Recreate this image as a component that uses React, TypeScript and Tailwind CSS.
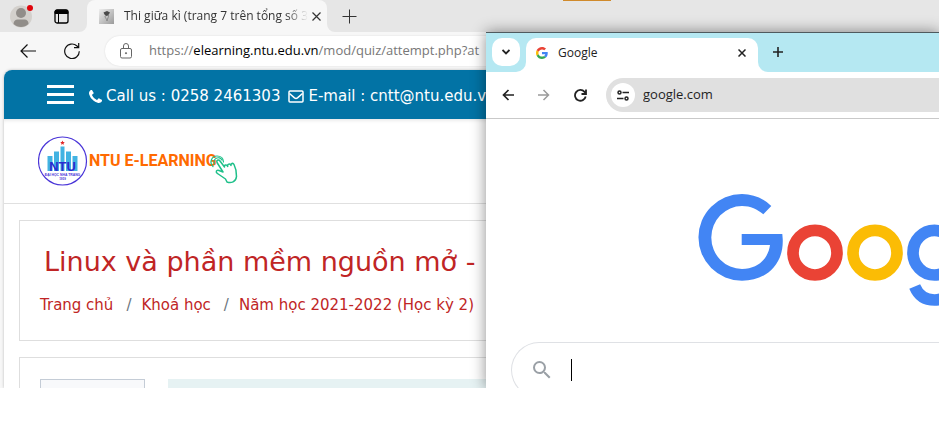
import type { ReactNode } from "react";

const uiFont = "font-['Open_Sans','Noto_Sans',sans-serif]";
const pageFont = "font-['DejaVu_Sans',sans-serif]";

function IconButton({ label, className = "", children }: { label: string; className?: string; children: ReactNode }) {
  return (
    <button type="button" aria-label={label} className={`flex shrink-0 items-center justify-center ${className}`}>
      {children}
    </button>
  );
}

function EdgeTabBar() {
  return (
    <div className="flex h-8 bg-[#f7f7f7]">
      <div className="flex w-[87px] shrink-0 items-center gap-5 rounded-br-lg bg-[#e6e6e6] pl-[11px]">
        <IconButton label="Profile" className="size-[22px]">
          <svg width="24" height="24" viewBox="0 0 24 24" className="shrink-0">
            <circle cx="11" cy="12.500" r="11" fill="#d3d0cc" />
            <circle cx="11" cy="9" r="5" fill="#918d89" />
            <path d="M3.500 20c0-3 2-4.500 4-4.500h7c2.500 0 4 1.500 4 4.500-4 4-11 4-15 0z" fill="#918d89" />
            <circle cx="20" cy="4" r="3" fill="#e0040b" />
          </svg>
        </IconButton>
        <IconButton label="Tab actions" className="size-4">
          <svg width="15" height="15" viewBox="0 0 15 15" fill="none" stroke="#000">
            <rect x="1" y="1" width="13" height="13" rx="2" strokeWidth="1.300" />
            <path d="M1 3.200a2 2 0 0 1 2-2h9a2 2 0 0 1 2 2V4.500H1z" fill="#000" />
            <path d="M4.500 4v10" />
          </svg>
        </IconButton>
      </div>
      <div className="w-60 shrink-0 bg-[linear-gradient(#e6e6e6_50%,#f7f7f7_50%)]">
        <div className="flex h-8 items-center rounded-t-lg bg-[#f7f7f7] pr-2 pl-3">
          <svg width="15" height="15" viewBox="0 0 15 15" className="shrink-0">
            <defs>
              <linearGradient id="fav" x1="0" x2="1" y1="0" y2="1">
                <stop offset="0" stopColor="#eee" />
                <stop offset="1" stopColor="#9a9a9a" />
              </linearGradient>
            </defs>
            <rect width="15" height="15" fill="url(#fav)" />
            <path d="M4.500 3.500 8 2l3 1.500L9 6.500 7 7 5.500 5.500z" fill="#4a4a4a" />
            <path d="M6 7c0 2 2 3 2 5M9.500 6c.5 2-1 3-1.500 6" stroke="#888" fill="none" />
          </svg>
          <span className="ml-2.5 flex-1 text-xs whitespace-nowrap text-[#333] [mask-image:linear-gradient(90deg,#000_88%,transparent)]">
            Thi giữa kì (trang 7 trên tổng số 3
          </span>
          <IconButton label="Close tab" className="size-4">
            <svg width="9" height="9" viewBox="0 0 9 9" stroke="#333" strokeWidth="1.200">
              <path d="m.5.5 8 8M8.500.5l-8 8" />
            </svg>
          </IconButton>
        </div>
      </div>
      <div className="flex flex-1 rounded-bl-lg bg-[#e6e6e6] pl-3.5">
        <IconButton label="New tab" className="h-8 w-4">
          <svg width="15" height="15" viewBox="0 0 15 15" stroke="#333" strokeWidth="1">
            <path d="M7.500.5v14M.5 7.500h14" />
          </svg>
        </IconButton>
        <div className="ml-[206px] h-px w-12 bg-[#d08a2b]" />
      </div>
    </div>
  );
}

function EdgeToolbar() {
  return (
    <div className="flex h-[38px] items-center bg-[#f7f7f7] pl-5">
      <IconButton label="Back" className="size-4">
        <svg width="16" height="14" viewBox="0 0 16 14" fill="none" stroke="#111" strokeWidth="1.200">
          <path d="M16 7H1M7.500.5 1 7l6.500 6.500" />
        </svg>
      </IconButton>
      <IconButton label="Refresh" className="ml-7 size-4">
        <svg width="16" height="16" viewBox="0 0 16 16" fill="none" stroke="#111" strokeWidth="1.200">
          <path d="M15.300 8.200A7.300 7.300 0 1 1 13 3l1.500 1.500M14.700 0v4.700H10" />
        </svg>
      </IconButton>
      <div className="ml-[25px] flex h-[30px] flex-1 items-center rounded-l-full bg-white pl-[15px] shadow-[0_0_2px_rgba(0,0,0,0.12)]">
        <svg width="12" height="16" viewBox="0 0 12 16" fill="none" stroke="#666" className="shrink-0">
          <rect x=".5" y="5.500" width="11" height="9.500" rx="1.500" />
          <path d="M3.500 5.500V3a2.500 2.500 0 0 1 5 0v2.500" />
          <circle cx="6" cy="10.200" r=".6" fill="#666" />
        </svg>
        <span className="ml-[17px] text-[13px] whitespace-nowrap text-[#777]">
          https://<span className="text-black">elearning.ntu.edu.vn</span>/mod/quiz/attempt.php?at
        </span>
      </div>
    </div>
  );
}

function NtuLogo() {
  return (
    <div className="flex h-[85px] items-center border-b border-[#e0e0e0] pl-[34px] shadow-[inset_0_4px_4px_-3px_rgba(0,0,0,0.12)]">
      <svg width="50" height="50" viewBox="0 0 50 50" className="shrink-0">
        <circle cx="24.500" cy="25" r="24" fill="#fff" stroke="#4a35d8" strokeWidth="1.200" />
        <path d="m24.500 4.500.7 1.400 1.600.2-1.200 1.100.3 1.600-1.400-.8-1.400.8.3-1.600-1.200-1.100 1.600-.2z" fill="#e22b2b" />
        <path d="M9.500 20h5v15h-5zM16 15.500h5V35h-5zM22.500 10.500h4V35h-4zM28 15.500h5V35h-5zM34.500 20h5v15h-5z" fill="#42b3e2" />
        <text x="24.500" y="34.500" textAnchor="middle" fontSize="13" fontFamily="Liberation Sans" fontWeight="700" fill="#2b2bd0">NTU</text>
        <text x="24.500" y="39.500" textAnchor="middle" fontSize="3.400" fontFamily="Liberation Sans" fontWeight="700" fill="#4a35d8">ĐẠI HỌC NHA TRANG</text>
        <text x="24.500" y="44" textAnchor="middle" fontSize="3" fontFamily="Liberation Sans" fontWeight="700" fill="#4a35d8">1959</text>
      </svg>
      <span className="ml-px font-['Roboto',sans-serif] text-base leading-5 font-bold whitespace-nowrap text-[#ff6a00]">
        NTU E-LEARNING
      </span>
      <svg width="30" height="32" viewBox="0 0 30 32" fill="none" stroke="#1fc08a" strokeWidth="1.500" strokeLinejoin="round" strokeLinecap="round" className="-ml-2 mt-5 shrink-0">
        <path d="M8 7.500 14 17l-4-1.500c-3-1-3.500 2-1.500 3l8 5.500 1.500 3c4 1.500 9 0 9.500-5.500.3-5-.5-8-2.500-12-1-2-3.500-1-3 1-1-2.500-4-1.500-3.300 1-1-2.500-3.800-1.500-3.200.5L11 6c-1.500-2-4-.5-3 1.500z" />
        <path d="M5.500 9a4.200 4.200 0 1 1 7.500-4M4 11.500C0 7.500 2.500 1 8 1c4 0 6.500 2.500 6.500 6" strokeWidth="1.200" />
      </svg>
    </div>
  );
}

function MoodlePage() {
  const crumbs = ["Trang chủ", "Khoá học", "Năm học 2021-2022 (Học kỳ 2)"];
  return (
    <div className={`ml-1 flex-1 overflow-hidden rounded-tl-lg bg-white shadow-[0_0_3px_rgba(0,0,0,0.25)] ${pageFont}`}>
      <header className="flex h-[49px] items-center bg-[#0273a5] pl-[43px] text-[15px] whitespace-nowrap text-white">
        <IconButton label="Menu" className="w-[27px]">
          <svg width="27" height="20" viewBox="0 0 27 20" fill="#fff">
            <path d="M0 0h27v3H0zM0 8h27v3H0zM0 16h27v3H0z" />
          </svg>
        </IconButton>
        <div className="flex items-center pt-1">
          <svg width="13" height="13" viewBox="0 0 1408 1408" fill="#fff" className="ml-[15px]">
            <path d="M1408 1112q0 27-10 70.500T1377 1251q-21 50-122 106-94 51-186 51-27 0-53-3.500t-57.500-12.500-47-14.500T856 1357t-49-18q-98-35-175-83-127-79-264-216T152 776q-48-77-83-175-3-9-18-49t-20.500-55.500-14.500-47T3.500 392 0 339q0-92 51-186Q107 52 157 31q25-11 68.500-21T296 0q14 0 21 3 18 6 53 76 11 19 30 54t35 63.500 31 53.500q3 4 17.500 25t21.500 35.500 7 28.500q0 20-28.500 50t-62 55-62 53-28.500 46q0 9 5 22.500t8.500 20.500 14 24 11.500 19q76 137 174 235t235 174q2 1 19 11.500t24 14 20.500 8.500 22.500 5q18 0 46-28.500t53-62 55-62 50-28.500q14 0 28.500 7t35.500 21.500 25 17.500q25 15 53.500 31t63.500 35 54 30q70 35 76 53 3 7 3 21z" />
          </svg>
          <span className="ml-1">Call us : 0258 2461303</span>
          <svg width="16" height="13" viewBox="0 0 16 13" fill="none" stroke="#fff" strokeWidth="1.500" className="ml-2">
            <rect x="1" y="1" width="14" height="11" rx="1" />
            <path d="m1.500 3.500 5 4.300q1.500 1.200 3 0l5-4.300" />
          </svg>
          <span className="ml-1">E-mail : cntt@ntu.edu.vn</span>
        </div>
      </header>
      <NtuLogo />
      <main className="space-y-4 pt-4 pl-[15px] whitespace-nowrap">
        <section className="h-[121px] border border-[#dedede] pt-[25px] pl-5 text-[#c02525]">
          <h1 className="pl-1 text-[27px] leading-8">Linux và phần mềm nguồn mở -</h1>
          <nav aria-label="Breadcrumb" className="mt-[15px] flex text-[15px] leading-6">
            {crumbs.map((crumb, i) => (
              <span key={crumb} className="flex">
                {i > 0 && <span className="mr-2.5 ml-[13px] text-[#6c757d]">/</span>}
                <a href="#">{crumb}</a>
              </span>
            ))}
          </nav>
        </section>
        <section className="flex h-40 gap-[23px] border border-[#dedede] pt-[21px] pl-5">
          <div className="w-[105px] border border-[#c4ccd6] bg-[#f8f9fb]" />
          <div className="flex-1 bg-[#e6f2f3]" />
        </section>
      </main>
    </div>
  );
}

function GoogleWordmark() {
  return (
    <svg role="img" aria-label="Google" width="272" height="112" viewBox="698 194 272 112" className="shrink-0">
      <path
        fill="#4285f4"
        d="M782.300 234H741.700v11H770c-1.500 12-10.500 24-28 24a30.700 31.500 0 0 1 0-63c8.500 0 15.500 3.300 21.300 8.300l8-8.300A43.300 43.300 0 0 0 742 194a43.500 43.300 0 0 0 0 86.700c25 0 42-17 40.700-42z"
      />
      <g fill="none" strokeWidth="11.700">
        <ellipse cx="815" cy="252.700" rx="22" ry="22.300" stroke="#ea4335" />
        <ellipse cx="875" cy="252.700" rx="22" ry="22.300" stroke="#fbbc05" />
        <g stroke="#4285f4">
          <ellipse cx="934.500" cy="252.700" rx="21.500" ry="22.300" />
          <path d="M955.500 226.500v49c0 16-9 24.500-21 24.500-10 0-16.500-5.500-19.800-13.500" />
        </g>
      </g>
    </svg>
  );
}

function ChromeWindow() {
  return (
    <section
      aria-label="Google"
      className="absolute top-8 right-0 bottom-0 left-[486px] flex flex-col border-t border-[#4f5a5e] bg-white shadow-[0_0_14px_rgba(0,0,0,0.45)]"
    >
      <div className="flex h-[39px] shrink-0 bg-[linear-gradient(#b5e8f2_50%,#fff_50%)]">
        <div className="w-10 shrink-0 rounded-br-[10px] bg-[#b5e8f2] pt-[5px] pl-1.5">
          <IconButton label="Search tabs" className="size-7 rounded-[10px] bg-white">
            <svg width="8" height="6" viewBox="0 0 8 6" fill="none" stroke="#222" strokeWidth="1.800">
              <path d="m.5 1 3.500 3.500L7.500 1" />
            </svg>
          </IconButton>
        </div>
        <div className="w-[232px] shrink-0 bg-[linear-gradient(#b5e8f2_50%,#fff_50%)] pt-[5px]">
          <div className="flex h-[34px] items-center rounded-t-[10px] bg-white pr-2 pb-[5px] pl-2.5">
            <svg width="12" height="12" viewBox="0 0 48 48" className="shrink-0">
              <path fill="#ea4335" d="M24 9.500c3.540 0 6.710 1.220 9.210 3.600l6.850-6.850C35.900 2.380 30.470 0 24 0 14.620 0 6.510 5.380 2.560 13.220l7.980 6.190C12.430 13.720 17.740 9.500 24 9.500z" />
              <path fill="#4285f4" d="M46.980 24.550c0-1.570-.15-3.090-.38-4.550H24v9.020h12.940c-.58 2.960-2.260 5.480-4.780 7.180l7.730 6c4.510-4.180 7.090-10.360 7.090-17.650z" />
              <path fill="#fbbc05" d="M10.530 28.590A14.500 14.500 0 0 1 9.770 24c0-1.600.27-3.140.76-4.590l-7.980-6.190A23.900 23.900 0 0 0 0 24c0 3.880.92 7.540 2.560 10.780z" />
              <path fill="#34a853" d="M24 48c6.480 0 11.930-2.130 15.890-5.810l-7.730-6c-2.150 1.450-4.920 2.300-8.160 2.300-6.260 0-11.570-4.220-13.470-9.910l-7.980 6.190C6.510 42.620 14.620 48 24 48z" />
            </svg>
            <span className="ml-2.5 flex-1 text-xs text-[#222]">Google</span>
            <IconButton label="Close" className="size-4">
              <svg width="8" height="8" viewBox="0 0 8 8" stroke="#222" strokeWidth="1.500">
                <path d="m.5.5 7 7M7.500.5l-7 7" />
              </svg>
            </IconButton>
          </div>
        </div>
        <div className="flex-1 rounded-bl-[10px] bg-[#b5e8f2] pt-[11px] pl-3">
          <IconButton label="New tab" className="size-4">
            <svg width="10" height="10" viewBox="0 0 10 10" stroke="#222" strokeWidth="1.600">
              <path d="M5 0v10M0 5h10" />
            </svg>
          </IconButton>
        </div>
      </div>
      <div className="flex h-[47px] shrink-0 items-center border-b border-[#c9c9c9] bg-white pl-3.5">
        <IconButton label="Back" className="size-4">
          <svg width="12" height="12" viewBox="0 0 12 12" fill="none" stroke="#222" strokeWidth="1.700">
            <path d="M12 6H1.500M6.500 1l-5 5 5 5" />
          </svg>
        </IconButton>
        <IconButton label="Forward" className="ml-5 size-4">
          <svg width="12" height="12" viewBox="0 0 12 12" fill="none" stroke="#9b9b9b" strokeWidth="1.500">
            <path d="M0 6h10.500M5.500 1l5 5-5 5" />
          </svg>
        </IconButton>
        <IconButton label="Reload" className="ml-5 size-4">
          <svg width="13" height="13" viewBox="0 0 13 13" fill="none" stroke="#222" strokeWidth="1.800">
            <path d="M11.700 7.500A5.400 5.400 0 1 1 10.500 2.800L11.800 4.200M12 .5v4.500H7.500" />
          </svg>
        </IconButton>
        <label className="ml-[18px] flex h-[34px] min-w-0 flex-1 items-center rounded-l-full bg-[#e0e0e0] pl-[5px]">
          <span className="flex size-6 shrink-0 items-center justify-center rounded-full bg-white">
            <svg width="12" height="11" viewBox="0 0 12 11" fill="none" stroke="#222" strokeWidth="1.500">
              <circle cx="2.500" cy="2.500" r="1.500" />
              <path d="M5.500 2.500H12M0 8.500h6.500" />
              <circle cx="9.500" cy="8.500" r="1.500" />
            </svg>
          </span>
          <input aria-label="Address" defaultValue="google.com" className="ml-2 min-w-0 flex-1 bg-transparent text-[13px] text-[#1f1f1f] outline-none" />
        </label>
      </div>
      <div className="min-h-0 flex-1 overflow-hidden">
        <div className="flex pt-[75px] pl-[212px]">
          <GoogleWordmark />
        </div>
        <label className="mt-9 ml-[25px] flex h-14 items-center rounded-l-full border border-r-0 border-[#dfe1e5] pl-[21px]">
          <svg width="18" height="18" viewBox="3 3 18 18" fill="#9aa0a6" className="shrink-0">
            <path d="M15.500 14h-.79l-.28-.27A6.470 6.470 0 0 0 16 9.500 6.500 6.500 0 1 0 9.500 16c1.610 0 3.090-.59 4.230-1.570l.27.28v.79l5 4.990L20.490 19zm-6 0C7.010 14 5 11.990 5 9.500S7.010 5 9.500 5 14 7.010 14 9.500 11.990 14 9.500 14z" />
          </svg>
          <span className="ml-5 h-[22px] w-px bg-black" />
          <input aria-label="Search" className="min-w-0 flex-1 bg-transparent outline-none" />
        </label>
      </div>
    </section>
  );
}

export default function App() {
  return (
    <div className={`min-h-screen bg-white ${uiFont}`}>
      <div className="relative flex h-[388px] flex-col overflow-hidden bg-[#f7f7f7]">
        <EdgeTabBar />
        <EdgeToolbar />
        <MoodlePage />
        <ChromeWindow />
      </div>
    </div>
  );
}
